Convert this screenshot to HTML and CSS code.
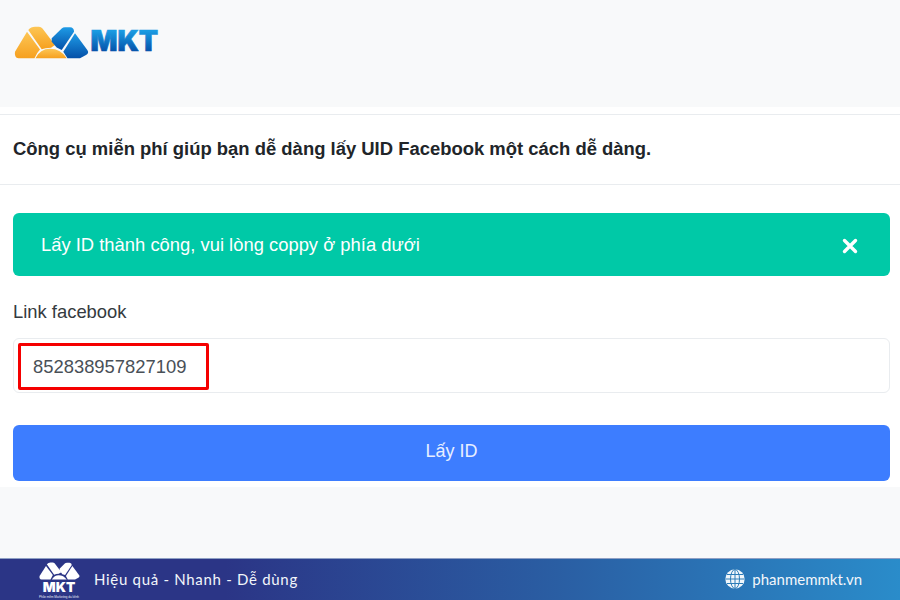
FILE: index.html
```html
<!DOCTYPE html>
<html lang="vi">
<head>
<meta charset="utf-8">
<title>Lấy UID Facebook</title>
<link rel="stylesheet" href="styles.css">
</head>
<body>
<div class="page">
  <header class="top">
    <svg class="logo" width="160" height="44" viewBox="0 -4 160 44">
      <defs>
        <linearGradient id="og" x1="0" y1="0" x2="0" y2="1"><stop offset="0" stop-color="#fdc655"/><stop offset="1" stop-color="#f6a01f"/></linearGradient>
        <linearGradient id="bg" x1="0" y1="0" x2="0" y2="1"><stop offset="0" stop-color="#1e9be6"/><stop offset="1" stop-color="#0450a8"/></linearGradient>
        <linearGradient id="tg" gradientUnits="userSpaceOnUse" x1="0" y1="5" x2="0" y2="26"><stop offset="0" stop-color="#1a9be2"/><stop offset="1" stop-color="#0450a8"/></linearGradient>
      </defs>
      <path d="M13 5.8 L26 23.5 Q22.5 27 20.5 32.3 L4.5 32.3 Q0 31.5 1 25.7 Z" fill="url(#og)"/>
      <path d="M14.3 4 Q17 .7 21 .7 L25 .7 Q27 .7 28.5 2.5 L41 19 L37 21.7 Q31 22 27.7 23.3 Z" fill="url(#og)"/>
      <path d="M21.5 32.3 Q26 22.8 36 22.8 Q47 22.8 52.7 32.3 Z" fill="url(#og)"/>
      <path d="M37.7 12.3 L47.7 2.5 Q49 1.3 51 1.3 L56 1.3 Q60 1.5 60 5.7 L47.7 24 L42.7 21.5 L37.7 15.7 Z" fill="url(#bg)"/>
      <path d="M61 7.3 L73.3 24 Q75.5 27 72 29 L66 32.3 L53.5 32.3 L49.3 25.7 Z" fill="url(#bg)"/>
      <text class="logo-text" x="76.5" y="25.4" fill="url(#tg)" stroke="url(#tg)">MKT</text>
    </svg>
  </header>
  <main class="card">
    <h1 class="title">Công cụ miễn phí giúp bạn dễ dàng lấy UID Facebook một cách dễ dàng.</h1>
    <div class="body">
      <div class="alert">
        <span>Lấy ID thành công, vui lòng coppy ở phía dưới</span>
        <svg class="close" width="16" height="16" viewBox="0 0 16 16"><path d="M2.5 2.5 L13.5 13.5 M13.5 2.5 L2.5 13.5" stroke="#fff" stroke-width="3.4" stroke-linecap="round"/></svg>
      </div>
      <label class="label">Link facebook</label>
      <div class="input">
        <span class="value">852838957827109</span>
        <span class="highlight"></span>
      </div>
      <button class="btn">Lấy ID</button>
    </div>
  </main>
  <div class="gap"></div>
  <footer class="foot">
    <div class="foot-left">
      <div class="foot-logo">
        <svg width="41" height="18" viewBox="0 0 75 33">
          <g fill="#fff">
            <path d="M12.7 7.3 L25.3 24 L21 32.3 L4.5 32.3 Q0 31.5 1 25.7 Z"/>
            <path d="M14.3 4 Q17 .7 21 .7 L25 .7 Q27 .7 28.5 2.5 L41 19 L36 21.7 Q31 22 27.7 23.3 Z"/>
            <path d="M23.5 32.3 Q28 24.5 36 24.5 Q45 24.5 50.7 32.3 Z"/>
            <path d="M37.7 12.3 L47.7 2.5 Q49 1.3 51 1.3 L56 1.3 Q60 1.5 60 5.7 L47.7 24 L42.7 22.3 L37.7 15.7 Z"/>
            <path d="M61 7.3 L73.3 24 Q75.5 27 72 29 L66 32.3 L52.7 32.3 L49.3 25.7 Z"/>
          </g>
        </svg>
        <span class="foot-mkt">MKT</span>
        <span class="foot-tag">Phần mềm Marketing đa kênh</span>
      </div>
      <span class="slogan">Hiệu quả - Nhanh - Dễ dùng</span>
    </div>
    <div class="foot-right">
      <svg class="globe" width="20" height="20" viewBox="0 0 20 20">
        <circle cx="10" cy="10" r="9.7" fill="#f0f6fb"/>
        <g fill="none" stroke="#2c7cb8" stroke-width="1">
          <ellipse cx="10" cy="10" rx="4.5" ry="9.5"/>
          <path d="M10 .5 V19.5 M.5 10 H19.5 M2 5.5 H18 M2 14.5 H18"/>
        </g>
      </svg>
      <span class="site">phanmemmkt.vn</span>
    </div>
  </footer>
</div>
</body>
</html>
```
FILE: styles.css
```css
* { box-sizing: border-box; }
html, body { margin: 0; padding: 0; }
body { font-family: "Liberation Sans", Arial, sans-serif; background: #f8f9fa; color: #212529; }
.page { width: 900px; height: 600px; display: flex; flex-direction: column; overflow: hidden; }
.top { height: 107px; background: #f8f9fa; padding: 22px 0 0 14px; flex: none; }
.logo { display: block; }
.logo-text { font-family: Inter, sans-serif; font-weight: 900; font-size: 28.2px; stroke-width: .7px; }
.card { height: 380px; background: #fff; padding-top: 7px; flex: none; }
.title {
  margin: 0; height: 71px; border-top: 1px solid #e9ecef; border-bottom: 1px solid #e9ecef;
  padding: 0 13px 2px; display: flex; align-items: center;
  font-size: 18.45px; font-weight: 700; color: #212529;
}
.body { padding: 28px 10px 0 13px; }
.alert {
  height: 63px; background: #00c9a7; border-radius: 6px; color: #fff; font-size: 18.4px;
  display: flex; align-items: center; justify-content: space-between; padding: 0 32px 0 28px;
}
.close { display: block; margin-top: 2px; }
.label { display: block; margin-top: 25px; font-size: 18.4px; line-height: 22px; color: #343a40; }
.input {
  position: relative; height: 55px; margin-top: 15px; background: #fff; border: 1px solid #e9ecef; border-radius: 6px;
  display: flex; align-items: center; padding-left: 19px;
}
.value { font-size: 18.4px; color: #495057; position: relative; top: 1px; }
.highlight {
  position: absolute; left: 4px; top: 4px; width: 191px; height: 47px;
  border: 3.5px solid #f50000; border-radius: 2px;
}
.btn {
  display: block; width: 100%; height: 56px; margin-top: 32px; border: 0; border-radius: 6px; padding: 0 0 3px;
  background: #3d7dff; color: #e8efff; font-family: inherit; font-size: 18px;
}
.gap { flex: 1; background: #f8f9fa; }
.foot {
  height: 42px; flex: none; display: flex; align-items: center; justify-content: space-between;
  padding: 0 38px 2px 38px; color: #f2f6fb;
  background: linear-gradient(90deg, #2b3586 0%, #2b3586 25%, #2a5ea3 62%, #2a8cca 100%);
  border-top: 1px solid #8fa0c4;
}
.foot-left { display: flex; align-items: center; }
.foot-logo { width: 42px; height: 37px; display: flex; flex-direction: column; align-items: center; margin-top: 3px; }
.foot-logo svg { display: block; flex: none; }
.foot-mkt { font-family: Inter, sans-serif; font-weight: 900; font-size: 13.5px; line-height: 12px; margin-top: 1px; color: #fff; }
.foot-tag { font-size: 3px; line-height: 4px; margin-top: 2px; white-space: nowrap; color: #e6e9f5; }
.slogan { margin-left: 14px; font-family: Lato, sans-serif; font-size: 15px; letter-spacing: .7px; }
.foot-right { display: flex; align-items: center; gap: 7px; }
.globe { display: block; }
.site { font-family: Lato, sans-serif; font-size: 15px; }
```
